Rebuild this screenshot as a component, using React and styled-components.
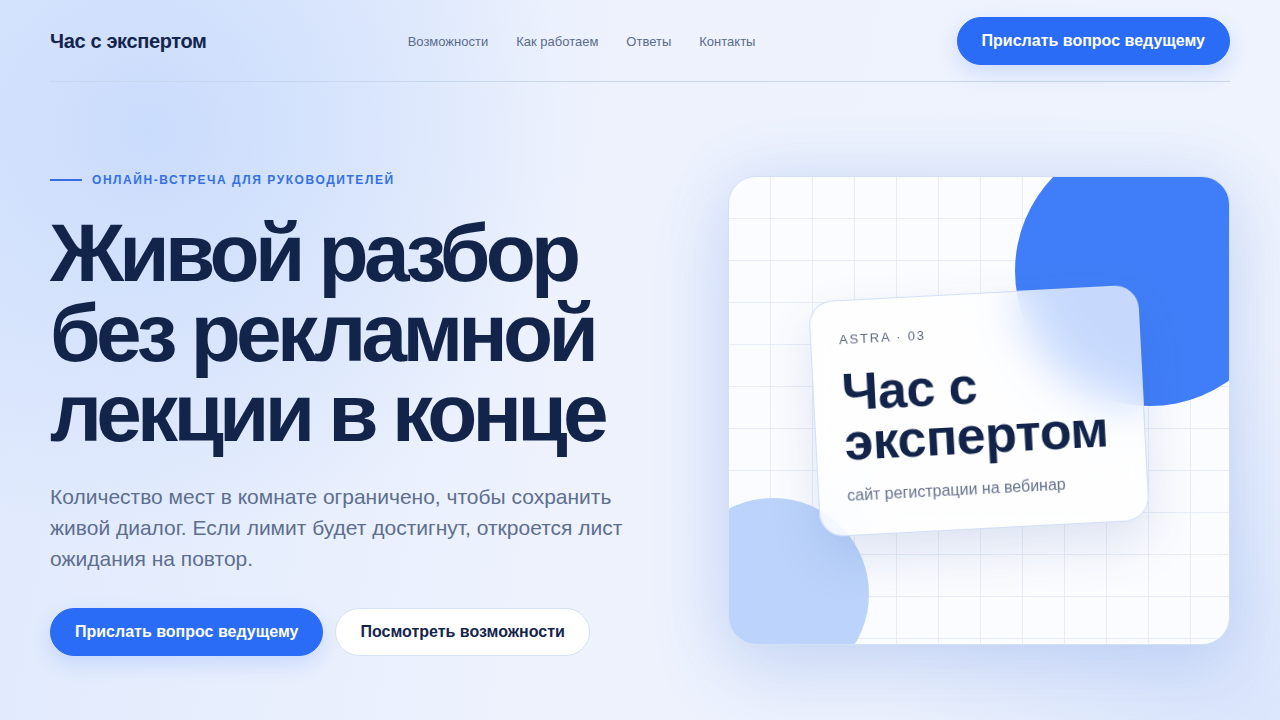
import React from 'react';
import styled, { createGlobalStyle } from 'styled-components';

const GlobalStyle = createGlobalStyle`
  * { box-sizing: border-box; }
  html, body { margin: 0; padding: 0; }
  body {
    font-family: "Liberation Sans", Arial, sans-serif;
    color: #14254d;
    min-height: 720px;
    overflow: hidden;
    background:
      radial-gradient(circle at 150px 130px, #cadcfc 0, rgba(202,220,252,0) 420px),
      radial-gradient(circle at 1260px 720px, #dbe6fc 0, rgba(219,230,252,0) 380px),
      linear-gradient(100deg, #dfe9fd 0%, #edf2fd 45%, #eef3fd 100%);
  }
`;

const Page = styled.div`
  width: 1280px;
  height: 720px;
  padding: 0 50px;
`;

const Header = styled.header`
  height: 82px;
  display: flex;
  align-items: center;
  justify-content: space-between;
  border-bottom: 1px solid #c8d7f0;
  padding-top: 1px;
`;

const Logo = styled.div`
  font-size: 20px;
  font-weight: 700;
  letter-spacing: -0.018em;
  color: #14254d;
`;

const Nav = styled.nav`
  display: flex;
  gap: 28px;
`;

const NavLink = styled.a`
  font-size: 13px;
  color: #5b6b8c;
  text-decoration: none;
`;

const Button = styled.a`
  display: inline-flex;
  align-items: center;
  justify-content: center;
  height: 48px;
  padding: 0 24px;
  border-radius: 24px;
  font-size: 16px;
  font-weight: 700;
  text-decoration: none;
  white-space: nowrap;
  background: ${p => (p.$ghost ? '#ffffff' : '#2a6cf6')};
  color: ${p => (p.$ghost ? '#14254d' : '#ffffff')};
  border: 1px solid ${p => (p.$ghost ? '#d5e1f4' : '#2a6cf6')};
  box-shadow: ${p => (p.$ghost ? 'none' : '0 8px 20px rgba(42,108,246,0.16)')};
`;

const Hero = styled.section`
  display: grid;
  grid-template-columns: 1fr 501px;
  gap: 59px;
  padding-top: 90px;
`;

const Left = styled.div`
  display: flex;
  flex-direction: column;
`;

const Eyebrow = styled.div`
  display: flex;
  align-items: center;
  gap: 10px;
  height: 16px;
  font-size: 12px;
  font-weight: 700;
  letter-spacing: 0.13em;
  color: #3470e4;
  &::before {
    content: '';
    width: 32px;
    height: 2px;
    background: #3470e4;
  }
`;

const Title = styled.h1`
  margin: 25px 0 0;
  font-size: 82px;
  line-height: 80px;
  font-weight: 700;
  letter-spacing: -0.058em;
  color: #13244b;
`;

const Lead = styled.p`
  margin: 28px 0 0;
  max-width: 590px;
  font-size: 21px;
  line-height: 31px;
  color: #5e6e8e;
`;

const Actions = styled.div`
  display: flex;
  gap: 12px;
  margin-top: 34px;
`;

const Visual = styled.div`
  position: relative;
  margin-top: 4px;
  margin-left: -1px;
  width: 502px;
  height: 469px;
  border-radius: 28px;
  overflow: hidden;
  border: 1px solid #d3e0f5;
  background-color: #fbfcff;
  background-image:
    linear-gradient(#e7edf7 1px, transparent 1px),
    linear-gradient(90deg, #e7edf7 1px, transparent 1px);
  background-size: 42px 42px;
  background-position: -1px -1px;
  box-shadow: 0 30px 80px rgba(60, 110, 220, 0.16), 0 0 60px rgba(120, 160, 240, 0.18);
`;

const Blob = styled.div`
  position: absolute;
  border-radius: 50%;
  left: ${p => p.$x}px;
  top: ${p => p.$y}px;
  width: ${p => p.$d}px;
  height: ${p => p.$d}px;
  background: ${p => p.$color};
`;

const Glass = styled.div`
  position: absolute;
  left: 85px;
  top: 116px;
  width: 330px;
  height: 236px;
  padding: 31px 28px 0 28px;
  border-radius: 24px;
  transform: rotate(-3deg);
  background: rgba(255, 255, 255, 0.7);
  backdrop-filter: blur(24px);
  -webkit-backdrop-filter: blur(24px);
  border: 1px solid rgba(205, 220, 245, 0.9);
  box-shadow: 0 22px 50px rgba(40, 80, 160, 0.14);
`;

const Tag = styled.div`
  font-size: 13px;
  letter-spacing: 0.14em;
  color: #5d6880;
`;

const CardTitle = styled.div`
  margin-top: 20px;
  font-size: 52px;
  line-height: 50px;
  font-weight: 700;
  letter-spacing: -0.01em;
  color: #13244b;
`;

const CardSub = styled.div`
  margin-top: 20px;
  font-size: 16px;
  color: #67728d;
`;

export default function App() {
  return (
    <Page>
      <GlobalStyle />
      <Header>
        <Logo>Час с экспертом</Logo>
        <Nav>
          <NavLink href="#">Возможности</NavLink>
          <NavLink href="#">Как работаем</NavLink>
          <NavLink href="#">Ответы</NavLink>
          <NavLink href="#">Контакты</NavLink>
        </Nav>
        <Button href="#">Прислать вопрос ведущему</Button>
      </Header>
      <Hero>
        <Left>
          <Eyebrow>ОНЛАЙН-ВСТРЕЧА ДЛЯ РУКОВОДИТЕЛЕЙ</Eyebrow>
          <Title>Живой разбор без рекламной лекции в конце</Title>
          <Lead>
            Количество мест в комнате ограничено, чтобы сохранить живой диалог. Если лимит
            будет достигнут, откроется лист ожидания на повтор.
          </Lead>
          <Actions>
            <Button href="#">Прислать вопрос ведущему</Button>
            <Button href="#" $ghost>Посмотреть возможности</Button>
          </Actions>
        </Left>
        <Visual>
          <Blob $x={286} $y={-41} $d={270} $color="#3f7ef8" />
          <Blob $x={-52} $y={321} $d={192} $color="#bcd4fb" />
          <Glass>
            <Tag>ASTRA · 03</Tag>
            <CardTitle>Час с<br />экспертом</CardTitle>
            <CardSub>сайт регистрации на вебинар</CardSub>
          </Glass>
        </Visual>
      </Hero>
    </Page>
  );
}
